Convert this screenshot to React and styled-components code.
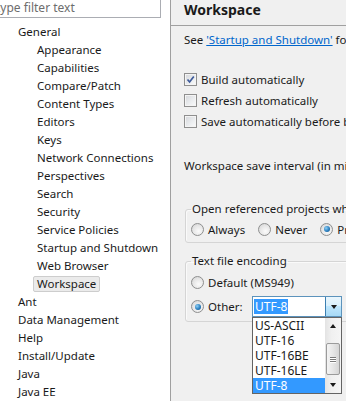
import React from 'react';
import styled, { createGlobalStyle } from 'styled-components';

const GlobalStyle = createGlobalStyle`
  html, body {
    margin: 0;
    padding: 0;
    overflow: hidden;
  }
  body {
    font-family: "Noto Sans", "Liberation Sans", sans-serif;
    font-size: 11.5px;
    color: #1a1a1a;
    background: #f0f0f0;
  }
`;

const Window = styled.div`
  display: flex;
  width: 346px;
  height: 401px;
  overflow: hidden;
`;

/* ---------- left: preference tree ---------- */

const Sidebar = styled.div`
  width: 170px;
  flex: none;
  background: #fff;
  border-right: 1px solid #a0a0a0;
  overflow: hidden;
`;

const FilterBox = styled.div`
  box-sizing: border-box;
  margin: -2px 0 0 -20px;
  width: 181px;
  height: 20px;
  border: 1px solid #abadb3;
  padding-left: 15px;
  line-height: 18px;
  font-size: 12px;
  color: #6d6d6d;
  white-space: nowrap;
`;

const Tree = styled.div`
  padding-top: 5px;
`;

const TreeRow = styled.div`
  display: flex;
  align-items: center;
  height: 18px;
  padding-left: ${(p) => (p.level === 2 ? 33 : 14)}px;
  white-space: nowrap;
`;

const TreeLabel = styled.span`
  display: inline-block;
  padding: 0 3px;
  line-height: 14px;
  border: 1px solid ${(p) => (p.selected ? '#cdcdcd' : 'transparent')};
  border-radius: 2px;
  background: ${(p) => (p.selected ? '#ebebeb' : 'transparent')};
`;

/* ---------- right: workspace page ---------- */

const Main = styled.div`
  flex: 1;
  min-width: 0;
  overflow: hidden;
`;

const Header = styled.div`
  height: 25px;
  border-bottom: 1px solid #a0a0a0;
  padding-left: 13px;
`;

const Title = styled.div`
  font-weight: 700;
  font-size: 14px;
  line-height: 19px;
  white-space: nowrap;
`;

const Body = styled.div`
  padding-left: 13px;
  white-space: nowrap;
`;

const Line = styled.div`
  line-height: 16px;
  margin-top: ${(p) => p.top || 0}px;
`;

const Link = styled.a`
  color: #0066cc;
  text-decoration: underline;
`;

const CheckList = styled.div`
  margin-top: 21px;
`;

const CheckRow = styled.label`
  display: flex;
  align-items: center;
  gap: 4px;
  height: 21px;
`;

const CheckBox = styled.span`
  box-sizing: border-box;
  flex: none;
  width: 13px;
  height: 13px;
  border: 1px solid #8f8f8f;
  background: linear-gradient(135deg, #d4d6da 0%, #eceef0 60%, #fbfbfb 100%);
  box-shadow: inset 0 0 0 1px #f4f4f4;
  display: flex;
  align-items: center;
  justify-content: center;
`;

const Group = styled.fieldset`
  margin: ${(p) => p.top}px -40px 0 1px;
  padding: ${(p) => p.pad};
  min-width: 0;
  border: 1px solid #d5d5d5;
  border-radius: 3px;
  box-shadow: inset 1px 1px 0 #fafafa;
`;

const Legend = styled.legend`
  padding: 0 1px;
  line-height: 16px;
`;

const Options = styled.div`
  display: flex;
  align-items: center;
`;

const Option = styled.label`
  display: inline-flex;
  align-items: center;
  gap: 4px;
  height: 16px;
  margin-right: ${(p) => (p.width ? 0 : 13)}px;
  width: ${(p) => (p.width ? `${p.width}px` : 'auto')};
  flex: none;
`;

const Radio = styled.span`
  box-sizing: border-box;
  flex: none;
  width: 13px;
  height: 13px;
  border-radius: 50%;
  border: 1px solid #8e8f8f;
  background: radial-gradient(circle at 60% 65%, #fbfbfb 0%, #e6e6e6 55%, #cfcfcf 100%);
  display: flex;
  align-items: center;
  justify-content: center;

  &::after {
    content: '';
    display: ${(p) => (p.checked ? 'block' : 'none')};
    width: 6px;
    height: 6px;
    border-radius: 50%;
    background: radial-gradient(circle at 35% 35%, #8fd0f5 0%, #2a7fc0 55%, #134c7a 100%);
  }
`;

const EncodingRow = styled.div`
  display: flex;
  align-items: center;
  height: 21px;
  margin-top: 6px;
`;

/* ---------- combo + its drop list ---------- */

const Combo = styled.div`
  position: relative;
  box-sizing: border-box;
  width: 90px;
  height: 21px;
  border: 1px solid #5c93bc;
  background: #fff;
  display: flex;
  flex: none;
`;

const ComboField = styled.div`
  flex: 1;
  display: flex;
  align-items: center;
  padding-left: 1px;
`;

const Selection = styled.span`
  background: #3399ff;
  color: #fff;
  padding: 0 1px;
  line-height: 15px;
  font-size: 12px;
`;

const ComboButton = styled.div`
  width: 15px;
  border-left: 1px solid #3c7fb1;
  background: linear-gradient(#eaf6fd 0%, #d9f0fc 45%, #bee6fd 50%, #a7d9f5 100%);
  display: flex;
  align-items: center;
  justify-content: center;
`;

const Arrow = styled.span`
  width: 0;
  height: 0;
  border-left: 3.5px solid transparent;
  border-right: 3.5px solid transparent;
  ${(p) => (p.up ? 'border-bottom: 4px solid #1a1a1a;' : 'border-top: 4px solid #1a1a1a;')}
`;

const DropList = styled.div`
  position: absolute;
  top: calc(100% + 1px);
  left: -1px;
  width: 90px;
  box-sizing: border-box;
  border: 1px solid #646464;
  background: #fff;
  display: flex;
`;

const Items = styled.div`
  flex: 1;
  min-width: 0;
  overflow: hidden;
`;

const Item = styled.div`
  height: 15px;
  line-height: 15px;
  padding-left: 2px;
  font-size: 12px;
  background: ${(p) => (p.selected ? '#3399ff' : 'transparent')};
  color: ${(p) => (p.selected ? '#fff' : 'inherit')};
`;

const ScrollBar = styled.div`
  width: 16px;
  flex: none;
  display: flex;
  flex-direction: column;
  background: linear-gradient(90deg, #e3e3e3, #f0f0f0 40%, #f5f5f5);
`;

const ScrollArrow = styled.div`
  height: 16px;
  display: flex;
  align-items: center;
  justify-content: center;
`;

const Track = styled.div`
  flex: 1;
  padding-top: 9px;
`;

const Thumb = styled.div`
  box-sizing: border-box;
  height: 32px;
  margin: 0 1px;
  border: 1px solid #9b9b9b;
  border-radius: 2px;
  background: linear-gradient(90deg, #f4f4f4, #e6e6e6 50%, #d5d5d5);
  display: flex;
  flex-direction: column;
  align-items: center;
  justify-content: center;
  gap: 1px;
`;

const Grip = styled.span`
  width: 6px;
  height: 1px;
  background: #7a7a7a;
  box-shadow: 0 1px 0 #fff;
`;

const general = [
  'Appearance',
  'Capabilities',
  'Compare/Patch',
  'Content Types',
  'Editors',
  'Keys',
  'Network Connections',
  'Perspectives',
  'Search',
  'Security',
  'Service Policies',
  'Startup and Shutdown',
  'Web Browser',
  'Workspace',
];

const topLevel = ['Ant', 'Data Management', 'Help', 'Install/Update', 'Java', 'Java EE'];

const encodings = ['US-ASCII', 'UTF-16', 'UTF-16BE', 'UTF-16LE', 'UTF-8'];

const CheckMark = () => (
  <svg width="9" height="9" viewBox="0 0 9 9">
    <path d="M1.5 4.5 L3.6 7 L7.8 1.5" fill="none" stroke="#3e5b9a" strokeWidth="1.7" />
  </svg>
);

const App = () => {
  return (
    <>
      <GlobalStyle />
      <Window>
        <Sidebar>
          <FilterBox>type filter text</FilterBox>
          <Tree>
            <TreeRow level={1}>
              <TreeLabel>General</TreeLabel>
            </TreeRow>
            {general.map((name) => (
              <TreeRow level={2} key={name}>
                <TreeLabel selected={name === 'Workspace'}>{name}</TreeLabel>
              </TreeRow>
            ))}
            {topLevel.map((name) => (
              <TreeRow level={1} key={name}>
                <TreeLabel>{name}</TreeLabel>
              </TreeRow>
            ))}
          </Tree>
        </Sidebar>

        <Main>
          <Header>
            <Title>Workspace</Title>
          </Header>
          <Body>
            <Line top={6}>
              See <Link>'Startup and Shutdown'</Link> for workspace startup and shutdown preferences.
            </Line>

            <CheckList>
              <CheckRow>
                <CheckBox>
                  <CheckMark />
                </CheckBox>
                Build automatically
              </CheckRow>
              <CheckRow>
                <CheckBox />
                Refresh automatically
              </CheckRow>
              <CheckRow>
                <CheckBox />
                Save automatically before build
              </CheckRow>
            </CheckList>

            <Line top={26}>Workspace save interval (in minutes):</Line>

            <Group top={27} pad="4px 5px 5px 5px">
              <Legend>Open referenced projects when a project is opened</Legend>
              <Options>
                <Option>
                  <Radio />
                  Always
                </Option>
                <Option>
                  <Radio />
                  Never
                </Option>
                <Option>
                  <Radio checked />
                  Prompt
                </Option>
              </Options>
            </Group>

            <Group top={10} pad="5px 5px 4px 5px">
              <Legend>Text file encoding</Legend>
              <Options>
                <Option>
                  <Radio />
                  Default (MS949)
                </Option>
              </Options>
              <EncodingRow>
                <Option width={61}>
                  <Radio checked />
                  Other:
                </Option>
                <Combo>
                  <ComboField>
                    <Selection>UTF-8</Selection>
                  </ComboField>
                  <ComboButton>
                    <Arrow />
                  </ComboButton>
                  <DropList>
                    <Items>
                      {encodings.map((enc) => (
                        <Item key={enc} selected={enc === 'UTF-8'}>
                          {enc}
                        </Item>
                      ))}
                    </Items>
                    <ScrollBar>
                      <ScrollArrow>
                        <Arrow up />
                      </ScrollArrow>
                      <Track>
                        <Thumb>
                          <Grip />
                          <Grip />
                          <Grip />
                        </Thumb>
                      </Track>
                      <ScrollArrow>
                        <Arrow />
                      </ScrollArrow>
                    </ScrollBar>
                  </DropList>
                </Combo>
              </EncodingRow>
            </Group>
          </Body>
        </Main>
      </Window>
    </>
  );
};

export default App;
